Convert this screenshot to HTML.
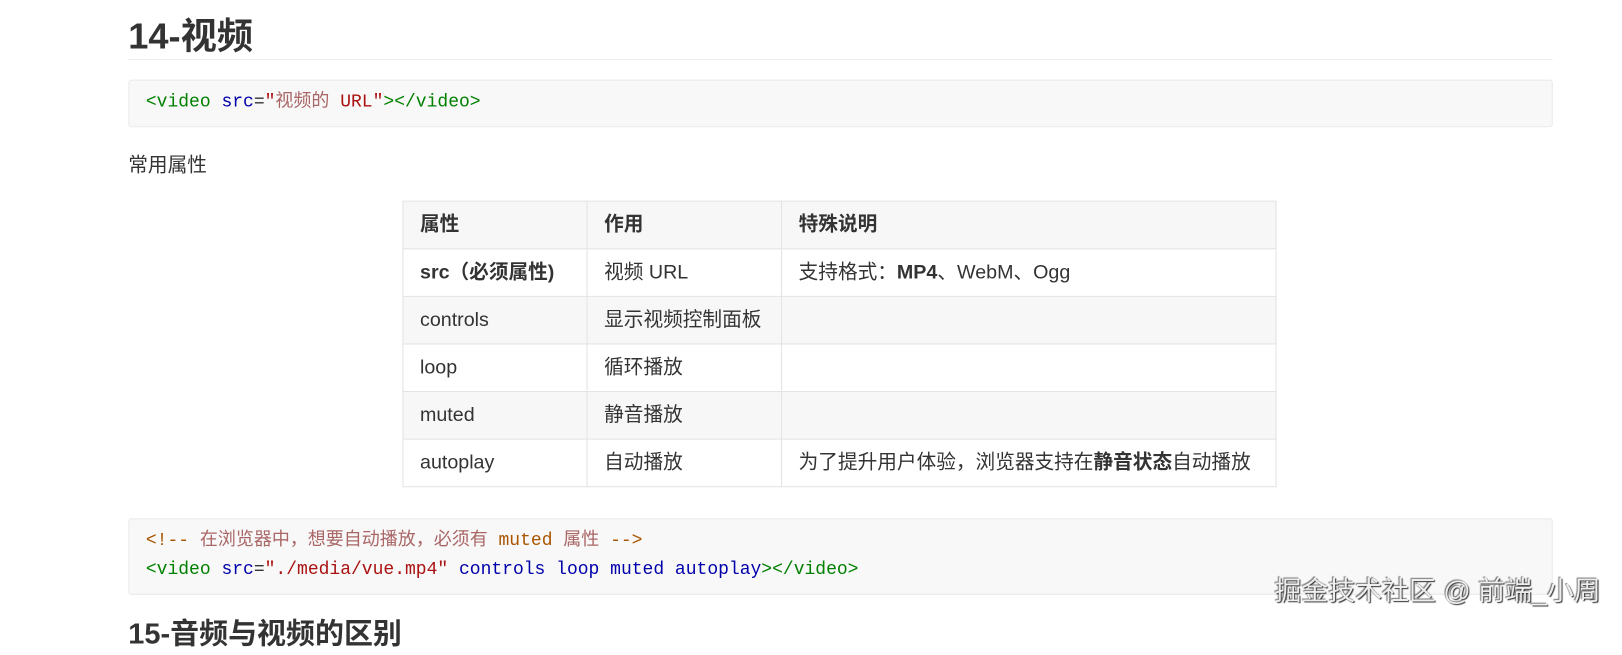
<!DOCTYPE html>
<html><head><meta charset="utf-8"><style>
html,body{margin:0;padding:0}
body{width:1622px;height:621px;overflow:hidden;background:#fff;font-family:"Liberation Sans","Noto Sans CJK SC",sans-serif;color:#333;position:relative}
#w{position:absolute;left:0;top:0;width:1568px;height:600px;transform:scale(1.0345);transform-origin:0 0}
.a{position:absolute}
h1{position:absolute;left:124px;top:12px;margin:0;font-size:35px;font-weight:bold;color:#333;line-height:48px}
.hr{left:124px;top:57px;width:1377px;height:1px;background:#eee}
.code{background:#f8f8f8;border:1px solid #eaeaea;border-radius:3px;font-family:"Liberation Mono","Noto Sans CJK SC",monospace;font-size:17.4px;line-height:28px}
.t{color:#008000}.k{color:#0000aa}.s{color:#a11}.c{color:#aa5500}
table{position:absolute;left:389px;top:194px;border-collapse:collapse;font-size:19px;color:#333}
td,th{border:1px solid #e3e3e3;height:46px;padding:0 16px;text-align:left;box-sizing:border-box;vertical-align:middle;line-height:22px}
th{font-weight:bold;background:#f7f7f7}
tr.g td{background:#f7f7f7}
.wm{left:1232px;top:551px;font-size:26px;color:#eee;text-shadow:1px 1px 1px #333,-1px -1px 1px #777;white-space:nowrap}
</style></head><body><div id="w">
<h1>14-视频</h1>
<div class="a hr"></div>
<div class="a code" style="left:124px;top:77px;width:1375px;height:44px;"><div style="padding:8px 0 0 16px;line-height:28px"><span class="t">&lt;video</span> <span class="k">src</span>=<span class="s">"<span style="color:#a66">视频的</span> URL"</span><span class="t">&gt;&lt;/video&gt;</span></div></div>
<div class="a" style="left:124px;top:145px;font-size:19px;">常用属性</div>
<table>
<tr><th style="width:178px">属性</th><th style="width:188px">作用</th><th style="width:478px">特殊说明</th></tr>
<tr><td><b>src（必须属性)</b></td><td>视频 URL</td><td>支持格式：<b>MP4</b>、WebM、Ogg</td></tr>
<tr class="g"><td>controls</td><td>显示视频控制面板</td><td></td></tr>
<tr><td>loop</td><td>循环播放</td><td></td></tr>
<tr class="g"><td>muted</td><td>静音播放</td><td></td></tr>
<tr><td>autoplay</td><td>自动播放</td><td>为了提升用户体验，浏览器支持在<b>静音状态</b>自动播放</td></tr>
</table>
<div class="a code" style="left:124px;top:501px;width:1375px;height:72px;"><div style="padding:8px 0 0 16px;"><span class="c">&lt;!-- <span style="color:#a66">在浏览器中，想要自动播放，必须有</span> muted <span style="color:#a66">属性</span> --&gt;</span><br><span class="t">&lt;video</span> <span class="k">src</span>=<span class="s">"./media/vue.mp4"</span> <span class="k">controls</span> <span class="k">loop</span> <span class="k">muted</span> <span class="k">autoplay</span><span class="t">&gt;&lt;/video&gt;</span></div></div>
<div class="a" style="left:124px;top:593px;font-size:28px;font-weight:bold;color:#333;line-height:40px;white-space:nowrap">15-音频与视频的区别</div>
<div class="a wm">掘金技术社区 @ 前端_小周</div>
</div></body></html>
